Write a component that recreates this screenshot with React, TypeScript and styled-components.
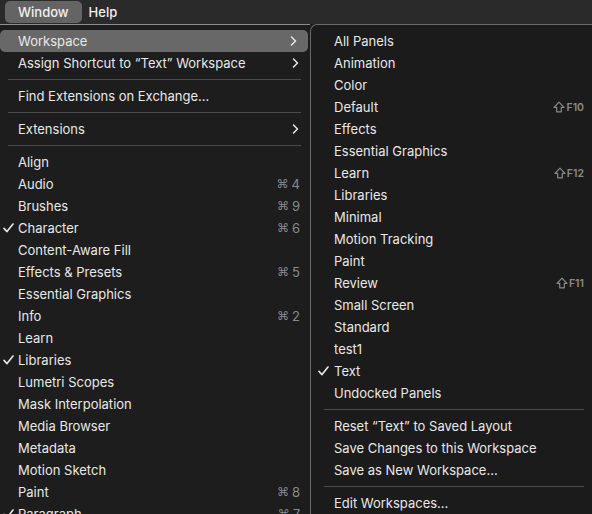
import React from "react";
import styled, { createGlobalStyle } from "styled-components";

const GlobalStyle = createGlobalStyle`
  html, body {
    margin: 0;
    padding: 0;
    background: #1c1c1c;
    overflow: hidden;
    height: 514px;
  }
  body {
    font-family: "Inter", "Noto Sans", "Liberation Sans", sans-serif;
    font-size: 13px;
    color: #e6e6e6;
    -webkit-font-smoothing: antialiased;
  }
`;

const Page = styled.div`
  width: 592px;
  height: 514px;
  display: flex;
  flex-direction: column;
  overflow: hidden;
`;

const MenuBar = styled.div`
  height: 24px;
  flex: none;
  background: #2a2a2a;
  display: flex;
  align-items: center;
  padding-left: 5px;
  gap: 2px;
`;

const MenuTitle = styled.div<{ $active?: boolean }>`
  height: 22px;
  margin-top: -1px;
  display: flex;
  align-items: center;
  padding: 0 ${(p) => (p.$active ? 13 : 5)}px;
  border-radius: 5px;
  background: ${(p) => (p.$active ? "#646464" : "transparent")};
  color: #f0f0f0;
  font-weight: 500;
`;

const Menus = styled.div`
  flex: 1;
  display: flex;
  align-items: stretch;
  min-height: 0;
`;

const MainMenu = styled.div`
  width: 310px;
  flex: none;
  background: #1d1d1d;
  border-top: 1px solid #8e8e8e;
  padding-top: 5px;
  box-sizing: border-box;
`;

const SubMenu = styled.div`
  flex: 1;
  background: #1b1b1b;
  border-top: 1px solid #6a6a6a;
  border-left: 1px solid #6a6a6a;
  border-top-left-radius: 7px;
  padding-top: 5px;
  box-sizing: border-box;
`;

const Row = styled.div<{ $indent: number; $right: number; $hl?: boolean }>`
  position: relative;
  height: 22px;
  display: flex;
  align-items: center;
  padding-left: ${(p) => p.$indent}px;
  padding-right: ${(p) => p.$right}px;
  margin-right: ${(p) => (p.$hl ? 2 : 0)}px;
  border-radius: 5px;
  background: ${(p) => (p.$hl ? "#686868" : "transparent")};
  white-space: nowrap;
`;

const Label = styled.span`
  flex: 1;
  color: #e8e8e8;
`;

const CheckMark = styled.svg<{ $left: number }>`
  position: absolute;
  left: ${(p) => p.$left}px;
  top: 6px;
  width: 11px;
  height: 10px;
`;

const Shortcut = styled.span`
  display: flex;
  align-items: center;
  gap: 3px;
  color: #8a8a8a;
  font-size: 13px;
`;

const CmdGlyph = styled.span`
  font-family: "DejaVu Sans", sans-serif;
  font-size: 12px;
`;

const ShiftKey = styled.span`
  display: flex;
  align-items: center;
  gap: 1px;
  color: #8a8a8a;
  font-size: 10.5px;
  font-weight: 600;
`;

const Chevron = styled.svg`
  width: 7px;
  height: 10px;
  margin-right: 1px;
`;

const Separator = styled.div<{ $left: number; $right: number }>`
  height: 1px;
  background: #4a4a4a;
  margin: 5px ${(p) => p.$right}px 5px ${(p) => p.$left}px;
`;

type Item =
  | { sep: true }
  | {
      sep?: false;
      label: string;
      check?: boolean;
      cmd?: string;
      shift?: string;
      sub?: boolean;
      hl?: boolean;
    };

const mainItems: Item[] = [
  { label: "Workspace", sub: true, hl: true },
  { label: "Assign Shortcut to \u201CText\u201D Workspace", sub: true },
  { sep: true },
  { label: "Find Extensions on Exchange..." },
  { sep: true },
  { label: "Extensions", sub: true },
  { sep: true },
  { label: "Align" },
  { label: "Audio", cmd: "4" },
  { label: "Brushes", cmd: "9" },
  { label: "Character", cmd: "6", check: true },
  { label: "Content-Aware Fill" },
  { label: "Effects & Presets", cmd: "5" },
  { label: "Essential Graphics" },
  { label: "Info", cmd: "2" },
  { label: "Learn" },
  { label: "Libraries", check: true },
  { label: "Lumetri Scopes" },
  { label: "Mask Interpolation" },
  { label: "Media Browser" },
  { label: "Metadata" },
  { label: "Motion Sketch" },
  { label: "Paint", cmd: "8" },
  { label: "Paragraph", cmd: "7", check: true },
];

const subItems: Item[] = [
  { label: "All Panels" },
  { label: "Animation" },
  { label: "Color" },
  { label: "Default", shift: "F10" },
  { label: "Effects" },
  { label: "Essential Graphics" },
  { label: "Learn", shift: "F12" },
  { label: "Libraries" },
  { label: "Minimal" },
  { label: "Motion Tracking" },
  { label: "Paint" },
  { label: "Review", shift: "F11" },
  { label: "Small Screen" },
  { label: "Standard" },
  { label: "test1" },
  { label: "Text", check: true },
  { label: "Undocked Panels" },
  { sep: true },
  { label: "Reset \u201CText\u201D to Saved Layout" },
  { label: "Save Changes to this Workspace" },
  { label: "Save as New Workspace..." },
  { sep: true },
  { label: "Edit Workspaces..." },
];

function renderItems(
  items: Item[],
  opts: { indent: number; right: number; check: number; sepL: number; sepR: number }
) {
  return items.map((it, i) => {
    if (it.sep) return <Separator key={i} $left={opts.sepL} $right={opts.sepR} />;
    return (
      <Row key={i} $indent={opts.indent} $right={opts.right} $hl={it.hl}>
        {it.check && (
          <CheckMark $left={opts.check} viewBox="0 0 11 10">
            <path
              d="M1 5.4 L4 8.6 L10 1"
              fill="none"
              stroke="#e8e8e8"
              strokeWidth="1.6"
              strokeLinecap="round"
              strokeLinejoin="round"
            />
          </CheckMark>
        )}
        <Label>{it.label}</Label>
        {it.cmd && (
          <Shortcut>
            <CmdGlyph>⌘</CmdGlyph>
            <span>{it.cmd}</span>
          </Shortcut>
        )}
        {it.shift && (
          <ShiftKey>
            <svg width="12" height="12" viewBox="0 0 12 12">
              <path
                d="M6 1.2 L11 6.4 H8.3 V10.8 H3.7 V6.4 H1 Z"
                fill="none"
                stroke="#8a8a8a"
                strokeWidth="1.2"
                strokeLinejoin="round"
              />
            </svg>
            <span>{it.shift}</span>
          </ShiftKey>
        )}
        {it.sub && (
          <Chevron viewBox="0 0 7 10">
            <path
              d="M1.5 1 L5.5 5 L1.5 9"
              fill="none"
              stroke="#e8e8e8"
              strokeWidth="1.5"
              strokeLinecap="round"
              strokeLinejoin="round"
            />
          </Chevron>
        )}
      </Row>
    );
  });
}

export default function App() {
  return (
    <>
      <GlobalStyle />
      <Page>
        <MenuBar>
          <MenuTitle $active>Window</MenuTitle>
          <MenuTitle>Help</MenuTitle>
        </MenuBar>
        <Menus>
          <MainMenu>
            {renderItems(mainItems, { indent: 18, right: 10, check: 3, sepL: 8, sepR: 9 })}
          </MainMenu>
          <SubMenu>
            {renderItems(subItems, { indent: 23, right: 8, check: 7, sepL: 13, sepR: 8 })}
          </SubMenu>
        </Menus>
      </Page>
    </>
  );
}
